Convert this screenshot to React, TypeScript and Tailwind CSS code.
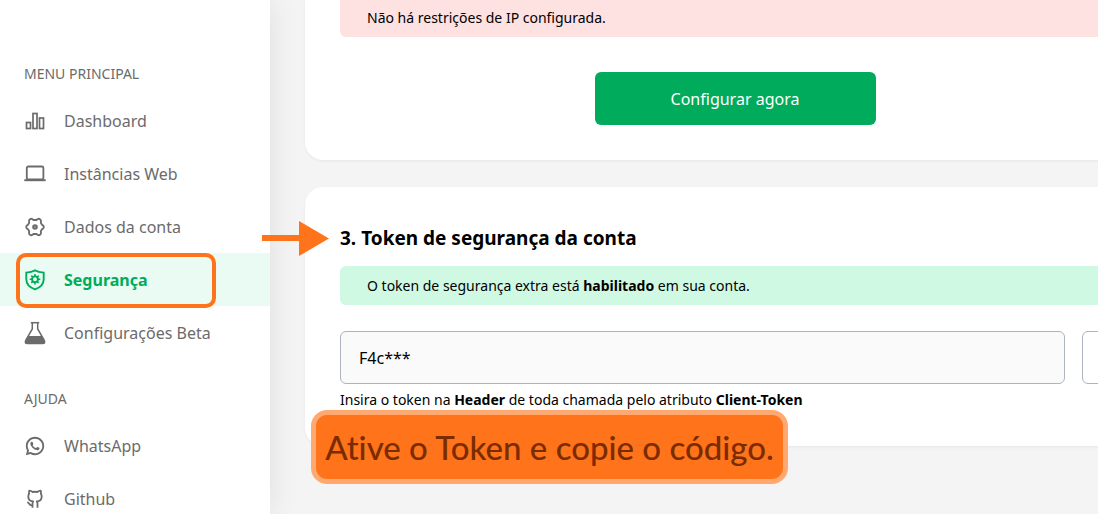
import React from 'react';
import { RiWhatsappLine } from 'react-icons/ri';

const BarsIcon = () => (
  <svg width="22" height="22" viewBox="0 0 22 22" fill="none" stroke="currentColor" strokeWidth="1.7">
    <rect x="2.5" y="12.5" width="4" height="6" />
    <rect x="9" y="3.5" width="4" height="15" />
    <rect x="15.5" y="8" width="4" height="10.5" />
  </svg>
);

const LaptopIcon = () => (
  <svg width="22" height="22" viewBox="0 0 22 22" fill="none" stroke="currentColor">
    <rect x="2.8" y="3.5" width="16.6" height="13" rx="1.5" strokeWidth="1.8" />
    <path d="M0.3 17.2H21.7" strokeWidth="2" />
  </svg>
);

// six rounded lobes with a dot in the middle
const GearIcon = () => (
  <svg
    width="22"
    height="22"
    viewBox="0 0 22 22"
    fill="none"
    stroke="currentColor"
    strokeWidth="1.8"
    strokeLinejoin="round">
    <path d="M6 3.2Q7 2.4 8.2 3L9.5 4H12.5L13.8 3Q15 2.4 16 3.2Q17.2 4 17 5.2L16.8 6.8L18 8.8L19.1 9.5Q19.8 10.2 19.8 11Q19.8 11.8 19.1 12.5L18 13.2L16.8 15.2L17 16.8Q17.2 18 16 18.8Q15 19.6 13.8 19L12.5 18H9.5L8.2 19Q7 19.6 6 18.8Q4.8 18 5 16.8L5.2 15.2L4 13.2L2.9 12.5Q2.2 11.8 2.2 11Q2.2 10.2 2.9 9.5L4 8.8L5.2 6.8L5 5.2Q4.8 4 6 3.2Z" />
    <circle cx="11" cy="11" r="1.7" strokeWidth="2.2" />
  </svg>
);

const ShieldIcon = () => (
  <svg width="22" height="22" viewBox="0 0 22 22" fill="none" stroke="currentColor" strokeWidth="1.9">
    <path d="M11 1.4C8.5 2.8 5.5 3.4 2.3 3.6V10.2C2.3 15.2 6.2 18.6 11 20.4C15.8 18.6 19.7 15.2 19.7 10.2V3.6C16.5 3.4 13.5 2.8 11 1.4Z" />
    <circle cx="11" cy="10.3" r="2.9" />
    <path
      d="M11 5V7.4M11 13.2V15.6M5.7 10.3H8.1M13.9 10.3H16.3M7.3 6.6L8.9 8.2M13.1 12.4L14.7 14M7.3 14L8.9 12.4M13.1 8.2L14.7 6.6"
      strokeWidth="1.6"
    />
  </svg>
);

const FlaskIcon = () => (
  <svg width="22" height="24" viewBox="0 0 22 24" fill="none" stroke="currentColor">
    <path d="M6.8 1.7H15.2" strokeWidth="1.5" />
    <path
      d="M8.3 2V8L2 18.8C0.6 21.2 1.4 22.6 3.5 22.6H18.5C20.6 22.6 21.4 21.2 20 18.8L13.7 8V2"
      strokeWidth="1.5"
    />
    <path
      d="M4.2 15H17.8L20.6 19.4C21.4 21.6 20.6 22.9 18.5 22.9H3.5C1.4 22.9 0.6 21.6 1.4 19.4Z"
      fill="currentColor"
      stroke="none"
    />
  </svg>
);

const GithubIcon = () => (
  <svg
    width="20"
    height="20"
    viewBox="0 0 20 20"
    fill="none"
    stroke="currentColor"
    strokeWidth="1.8"
    strokeLinejoin="round">
    <path d="M7.5 18.8V14.5C7.5 13.6 7.8 13 8.2 12.5C5 12.2 3.3 10.6 3.3 7.5C3.3 6.2 3.6 5.3 4.2 4.6C3.8 3.6 3.9 2.6 4.3 1.6C5.6 1.7 6.7 2.2 7.7 3C9.2 2.7 10.8 2.7 12.3 3C13.3 2.2 14.4 1.7 15.7 1.6C16.1 2.6 16.2 3.6 15.8 4.6C16.4 5.3 16.7 6.2 16.7 7.5C16.7 10.6 15 12.2 11.8 12.5C12.2 13 12.5 13.6 12.5 14.5V18.8" />
    <path d="M7.5 16.2C5.5 16.6 4.8 15.8 4.2 14.8C3.8 14 3.2 13.3 2.2 13.3" />
  </svg>
);

type NavItem = {
  label: string;
  icon: React.ReactNode;
  active?: boolean;
};

const mainMenu: NavItem[] = [
  { label: 'Dashboard', icon: <BarsIcon /> },
  { label: 'Instâncias Web', icon: <LaptopIcon /> },
  { label: 'Dados da conta', icon: <GearIcon /> },
  { label: 'Segurança', icon: <ShieldIcon />, active: true },
  { label: 'Configurações Beta', icon: <FlaskIcon /> },
];

const helpMenu: NavItem[] = [
  { label: 'WhatsApp', icon: <RiWhatsappLine size={22} /> },
  { label: 'Github', icon: <GithubIcon /> },
];

const NavList = ({ items }: { items: NavItem[] }) => (
  <ul>
    {items.map((item) => (
      <li key={item.label} className="relative">
        <a
          href="#"
          className={
            item.active
              ? 'flex h-[53px] items-center gap-[18px] bg-[#e9fbf3] pl-6 text-base font-bold text-[#00ac5b]'
              : 'flex h-[53px] items-center gap-[18px] pl-6 text-base text-[#6b6b6b]'
          }>
          <span className="flex w-[22px] justify-center">{item.icon}</span>
          {item.label}
        </a>
        {item.active && (
          <div className="absolute top-0 left-4 h-[55px] w-[200px] rounded-[10px] border-4 border-[#ff731a]" />
        )}
      </li>
    ))}
  </ul>
);

const App: React.FC = () => {
  return (
    <div className="flex h-screen overflow-hidden bg-[#f4f4f4] font-['Noto_Sans',sans-serif] text-black">
      <aside className="w-[270px] shrink-0 bg-white pt-[62px] shadow-[0_0_30px_rgba(0,0,0,0.09)]">
        <nav>
          <h2 className="h-8 pl-6 text-sm leading-6 text-[#6b6b6b]">MENU PRINCIPAL</h2>
          <NavList items={mainMenu} />
          <h2 className="mt-7 h-8 pl-6 text-sm leading-6 text-[#6b6b6b]">AJUDA</h2>
          <NavList items={helpMenu} />
        </nav>
      </aside>

      <main className="-mr-[67px] min-w-0 flex-1 pl-[35px]">
        <section className="rounded-b-[18px] bg-white px-[35px] pb-[35px] shadow-[0_1px_3px_rgba(0,0,0,0.06)]">
          <p className="h-[37px] rounded-b-md bg-[#fee1e1] pl-[27px] text-sm leading-9">
            Não há restrições de IP configurada.
          </p>
          <div className="mt-[35px] flex justify-center">
            <button className="h-[53px] w-[281px] rounded-md bg-[#00ac5b] text-base text-white">
              Configurar agora
            </button>
          </div>
        </section>

        <section className="relative mt-[27px] rounded-[18px] bg-white px-[35px] pt-[35px] pb-[34px] shadow-[0_1px_3px_rgba(0,0,0,0.06)]">
          <h1 className="text-[19px] leading-8 font-bold">3. Token de segurança da conta</h1>
          <p className="mt-3 h-[39px] rounded-md bg-[#d0f9e3] pl-[27px] text-sm leading-[39px]">
            O token de segurança extra está <b>habilitado</b> em sua conta.
          </p>
          <div className="mt-[26px] flex gap-[17px]">
            <input
              type="text"
              aria-label="Token de segurança"
              defaultValue="F4c***"
              className="h-[53px] min-w-0 flex-1 rounded-md border border-[#aeb3c0] bg-[#fafafa] px-[18px] text-base"
            />
            <button
              aria-label="Copiar token"
              className="h-[53px] w-12 rounded-md border border-[#aeb3c0] bg-white"
            />
          </div>
          <p className="mt-1 text-sm leading-6">
            Insira o token na <b>Header</b> de toda chamada pelo atributo <b>Client-Token</b>
          </p>

          <svg
            className="absolute top-[34px] -left-[43px] text-[#ff731a]"
            width="67"
            height="35"
            viewBox="0 0 67 35"
            fill="currentColor">
            <path d="M0 14H37V0L67 17.5L37 35V20H0Z" />
          </svg>
          <div className="absolute top-[223px] left-[6px] h-[74px] w-[477px] rounded-2xl border-[5px] border-[#ffa970] bg-[#ff731a] text-center font-['Lato',sans-serif] text-[33px] leading-[64px] font-medium whitespace-nowrap text-[#7a2c00] [font-variant-ligatures:none]">
            Ative o Token e copie o código.
          </div>
        </section>
      </main>
    </div>
  );
};

export default App;
